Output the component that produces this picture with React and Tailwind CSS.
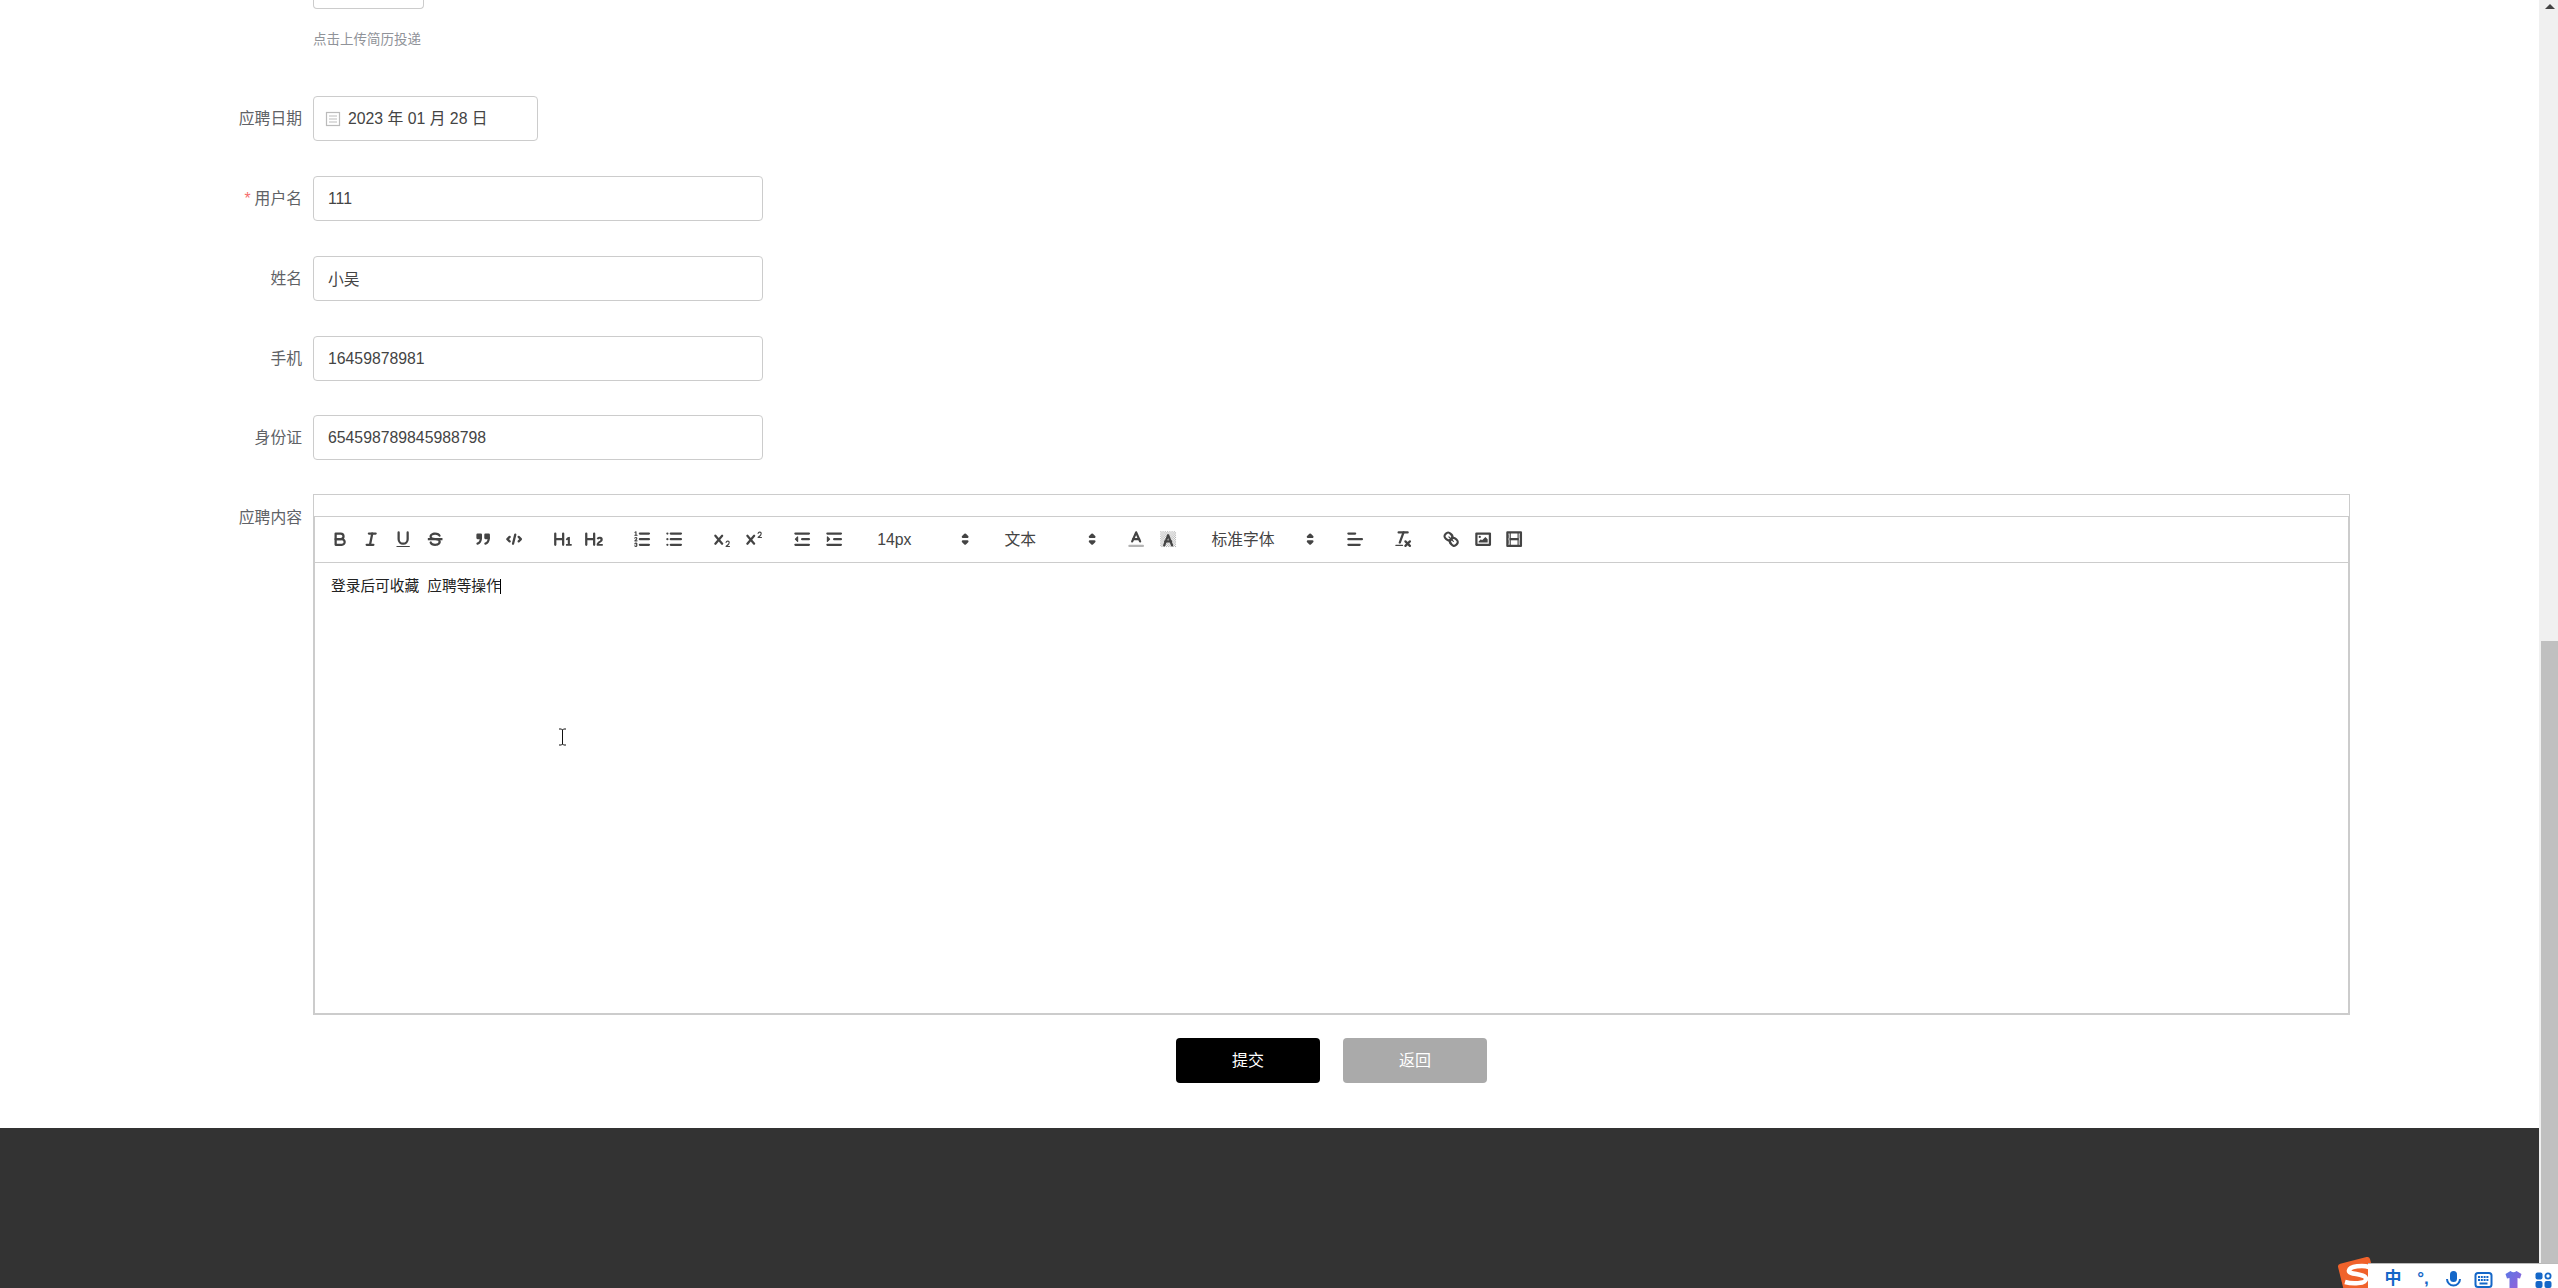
import React from 'react';

const FONT = "font-['Liberation_Sans','Noto_Sans_CJK_SC',sans-serif]";

function QlIcon({ children }) {
    return (
        <svg viewBox="0 0 18 18" width="20.3" height="20.3" fill="none" stroke="#444" strokeWidth="2" strokeLinecap="round" strokeLinejoin="round">
            {children}
        </svg>
    );
}

const F = { fill: '#444', stroke: 'none' };

const hatch = [];
for (let y = 2; y < 16; y++) {
    for (let x = 2; x < 16; x++) {
        if ((x + y) % 2 === 0) hatch.push([x, y]);
    }
}

const icons = {
    bold: (
        <>
            <path d="M5,4H9.5A2.5,2.5,0,0,1,12,6.5v0A2.5,2.5,0,0,1,9.5,9H5A0,0,0,0,1,5,9V4A0,0,0,0,1,5,4Z" />
            <path d="M5,9h5.5A2.5,2.5,0,0,1,13,11.5v0A2.5,2.5,0,0,1,10.5,14H5a0,0,0,0,1,0,0V9A0,0,0,0,1,5,9Z" />
        </>
    ),
    italic: (
        <>
            <line x1="7" x2="13" y1="4" y2="4" />
            <line x1="5" x2="11" y1="14" y2="14" />
            <line x1="8" x2="10" y1="14" y2="4" />
        </>
    ),
    underline: (
        <>
            <path d="M5,3V9a4.012,4.012,0,0,0,4,4H9a4.012,4.012,0,0,0,4-4V3" />
            <rect {...F} height="1" rx="0.5" ry="0.5" width="12" x="3" y="15" />
        </>
    ),
    strike: (
        <>
            <line x1="15.5" x2="2.5" y1="9" y2="9" strokeLinecap="butt" />
            <path {...F} d="M9.007,8C6.542,7.791,6,7.519,6,6.5,6,5.792,7.283,5,9,5c1.571,0,2.765.679,2.969,1.309a1,1,0,0,0,1.9-.617C13.356,4.106,11.354,3,9,3,6.2,3,4,4.538,4,6.5a3.2,3.2,0,0,0,.5,1.843Z" />
            <path {...F} d="M8.984,10C11.457,10.208,12,10.479,12,11.5c0,0.708-1.283,1.5-3,1.5-1.571,0-2.765-.679-2.969-1.309a1,1,0,1,0-1.9.617C4.644,13.894,6.646,15,9,15c2.8,0,5-1.538,5-3.5a3.2,3.2,0,0,0-.5-1.843Z" />
        </>
    ),
    quote: (
        <>
            <rect fill="#444" height="3" width="3" x="4" y="5" />
            <rect fill="#444" height="3" width="3" x="11" y="5" />
            <path d="M7,8c0,4.031-3,5-3,5" />
            <path d="M14,8c0,4.031-3,5-3,5" />
        </>
    ),
    code: (
        <>
            <polyline points="5 7 3 9 5 11" />
            <polyline points="13 7 15 9 13 11" />
            <line x1="10" x2="8" y1="5" y2="13" />
        </>
    ),
    h1: <path {...F} d="M10,4V14a1,1,0,0,1-2,0V10H3v4a1,1,0,0,1-2,0V4A1,1,0,0,1,3,4V8H8V4a1,1,0,0,1,2,0Zm6.06787,9.209H14.98975V7.59863a.54085.54085,0,0,0-.605-.60547h-.62744a1.01119,1.01119,0,0,0-.748.29688L11.645,8.56641a.5435.5435,0,0,0-.022.8584l.28613.30762a.53861.53861,0,0,0,.84717.0332l.09912-.08789a1.2137,1.2137,0,0,0,.2417-.35254h.02246s-.01123.30859-.01123.60547V13.209H12.041a.54085.54085,0,0,0-.605.60547v.43945a.54085.54085,0,0,0,.605.60547h4.02686a.54085.54085,0,0,0,.605-.60547v-.43945A.54085.54085,0,0,0,16.06787,13.209Z" />,
    h2: <path {...F} d="M16.73975,13.81445v.43945a.54085.54085,0,0,1-.605.60547H11.855a.58392.58392,0,0,1-.64893-.60547V14.0127c0-2.90527,3.39941-3.42187,3.39941-4.55469a.77675.77675,0,0,0-.84717-.78125,1.17684,1.17684,0,0,0-.83594.38477c-.2749.26367-.561.374-.85791.13184l-.4292-.34082c-.30811-.24219-.38525-.51758-.1543-.81445a2.97155,2.97155,0,0,1,2.45361-1.17676,2.45393,2.45393,0,0,1,2.68408,2.40918c0,2.45312-3.1792,2.92676-3.27832,3.93848h2.79443A.54085.54085,0,0,1,16.73975,13.81445ZM9,3A.99974.99974,0,0,0,8,4V8H3V4A1,1,0,0,0,1,4V14a1,1,0,0,0,2,0V10H8v4a1,1,0,0,0,2,0V4A.99974.99974,0,0,0,9,3Z" />,
    ol: (
        <>
            <line x1="7" x2="15" y1="4" y2="4" />
            <line x1="7" x2="15" y1="9" y2="9" />
            <line x1="7" x2="15" y1="14" y2="14" />
            <line strokeWidth="1" x1="2.5" x2="4.5" y1="5.5" y2="5.5" />
            <path {...F} d="M3.5,6A0.5,0.5,0,0,1,3,5.5V3.085l-0.276.138A0.5,0.5,0,0,1,2.053,3c-0.124-.247-0.023-0.324.224-0.447l1-.5A0.5,0.5,0,0,1,4,2.5v3A0.5,0.5,0,0,1,3.5,6Z" />
            <path strokeWidth="1" d="M4.5,10.5h-2c0-.234,1.85-1.076,1.85-2.234A0.959,0.959,0,0,0,2.5,8.156" />
            <path strokeWidth="1" d="M2.5,14.846a0.959,0.959,0,0,0,1.85-.109A0.7,0.7,0,0,0,3.75,14a0.688,0.688,0,0,0,.6-0.736,0.959,0.959,0,0,0-1.85-.109" />
        </>
    ),
    ul: (
        <>
            <line x1="6" x2="15" y1="4" y2="4" />
            <line x1="6" x2="15" y1="9" y2="9" />
            <line x1="6" x2="15" y1="14" y2="14" />
            <line x1="3" x2="3" y1="4" y2="4" />
            <line x1="3" x2="3" y1="9" y2="9" />
            <line x1="3" x2="3" y1="14" y2="14" />
        </>
    ),
    sub: (
        <>
            <path {...F} d="M15.5,15H13.861a3.858,3.858,0,0,0,1.914-2.975,1.8,1.8,0,0,0-1.6-1.751A1.921,1.921,0,0,0,12.021,11.7a0.50013,0.50013,0,1,0,.957.291h0a0.914,0.914,0,0,1,1.053-.725,0.81,0.81,0,0,1,.744.762c0,1.076-1.16971,1.86982-1.93971,2.43082A1.45639,1.45639,0,0,0,12,15.5a0.5,0.5,0,0,0,.5.5h3A0.5,0.5,0,0,0,15.5,15Z" />
            <path {...F} d="M9.65,5.241a1,1,0,0,0-1.409.108L6,7.964,3.759,5.349A1,1,0,0,0,2.192,6.59178Q2.21541,6.6213,2.241,6.649L4.684,9.5,2.241,12.35A1,1,0,0,0,3.71,13.70722q0.02557-.02768.049-0.05722L6,11.036,8.241,13.65a1,1,0,1,0,1.567-1.24277Q9.78459,12.3777,9.759,12.35L7.316,9.5,9.759,6.651A1,1,0,0,0,9.65,5.241Z" />
        </>
    ),
    sup: (
        <>
            <path {...F} d="M15.5,7H13.861a4.015,4.015,0,0,0,1.914-2.975,1.8,1.8,0,0,0-1.6-1.751A1.922,1.922,0,0,0,12.021,3.7a0.5,0.5,0,1,0,.957.291,0.917,0.917,0,0,1,1.053-.725,0.81,0.81,0,0,1,.744.762c0,1.077-1.164,1.925-1.934,2.486A1.423,1.423,0,0,0,12,7.5a0.5,0.5,0,0,0,.5.5h3A0.5,0.5,0,0,0,15.5,7Z" />
            <path {...F} d="M9.651,5.241a1,1,0,0,0-1.41.108L6,7.964,3.759,5.349a1,1,0,1,0-1.519,1.3L4.683,9.5,2.241,12.35a1,1,0,1,0,1.519,1.3L6,11.036,8.241,13.65a1,1,0,0,0,1.519-1.3L7.317,9.5,9.759,6.651A1,1,0,0,0,9.651,5.241Z" />
        </>
    ),
    outdent: (
        <>
            <line x1="3" x2="15" y1="14" y2="14" />
            <line x1="3" x2="15" y1="4" y2="4" />
            <line x1="9" x2="15" y1="9" y2="9" />
            <polyline fill="#444" strokeWidth="1" points="5 7 5 11 3 9 5 7" />
        </>
    ),
    indent: (
        <>
            <line x1="3" x2="15" y1="14" y2="14" />
            <line x1="3" x2="15" y1="4" y2="4" />
            <line x1="9" x2="15" y1="9" y2="9" />
            <polyline fill="#444" strokeWidth="1" points="3 7 3 11 5 9 3 7" />
        </>
    ),
    color: (
        <>
            <line opacity="0.4" x1="3" x2="15" y1="15" y2="15" />
            <polyline points="5.5 11 9 3 12.5 11" />
            <line x1="11.63" x2="6.38" y1="9" y2="9" />
        </>
    ),
    background: (
        <>
            <g opacity="0.4">
                {hatch.map(([x, y]) => (
                    <rect key={`${x}-${y}`} x={x} y={y} width="1" height="1" fill="#444" stroke="none" />
                ))}
            </g>
            <polyline points="5.5 14.5 9 5.5 12.5 14.5" />
            <line x1="11.63" x2="6.38" y1="11" y2="11" />
        </>
    ),
    align: (
        <>
            <line x1="3" x2="15" y1="9" y2="9" />
            <line x1="3" x2="13" y1="14" y2="14" />
            <line x1="3" x2="9" y1="4" y2="4" />
        </>
    ),
    clean: (
        <>
            <line x1="5" x2="13" y1="3" y2="3" />
            <line x1="6" x2="9.35" y1="12" y2="3" />
            <line x1="11" x2="15" y1="11" y2="15" />
            <line x1="15" x2="11" y1="11" y2="15" />
            <rect {...F} height="1" rx="0.5" ry="0.5" width="7" x="2" y="14" />
        </>
    ),
    link: (
        <>
            <line strokeWidth="1" x1="7" x2="11" y1="7" y2="11" />
            <path d="M8.9,4.577a3.476,3.476,0,0,1,.36,4.679A3.476,3.476,0,0,1,4.577,8.9C3.185,7.5,2.035,6.4,4.217,4.217S7.5,3.185,8.9,4.577Z" />
            <path d="M13.423,9.1a3.476,3.476,0,0,0-4.679-.36,3.476,3.476,0,0,0,.36,4.679c1.392,1.392,2.5,2.542,4.679.36S14.815,10.5,13.423,9.1Z" />
        </>
    ),
    image: (
        <>
            <rect height="10" width="12" x="3" y="4" />
            <circle {...F} cx="6" cy="7" r="1" />
            <polyline {...F} points="5 12 5 11 7 9 8 10 11 7 13 9 13 12 5 12" />
        </>
    ),
    video: (
        <>
            <rect height="12" width="12" x="3" y="3" />
            <rect {...F} height="12" width="1" x="5" y="3" />
            <rect {...F} height="12" width="1" x="12" y="3" />
            <rect {...F} height="2" width="8" x="5" y="8" />
            <rect {...F} height="3" width="1" x="3" y="5" />
            <rect {...F} height="3" width="1" x="3" y="10" />
            <rect {...F} height="3" width="1" x="14" y="5" />
            <rect {...F} height="3" width="1" x="14" y="10" />
        </>
    ),
};

function Btn({ name }) {
    return (
        <span className="flex h-[27px] w-[31.67px] items-center justify-center">
            <QlIcon>{icons[name]}</QlIcon>
        </span>
    );
}

function Group({ names }) {
    return (
        <span className="mr-[16.5px] flex">
            {names.map(n => <Btn key={n} name={n} />)}
        </span>
    );
}

function Picker({ label, className }) {
    return (
        <span className={`mr-[16.5px] flex h-[27px] items-center justify-between pl-[11px] pr-[2px] text-[15.8px] text-[#444] ${className}`}>
            {label}
            <QlIcon>
                <polygon strokeWidth="2" fill="#444" points="7 11 9 13 11 11 7 11" />
                <polygon strokeWidth="2" fill="#444" points="7 7 9 5 11 7 7 7" />
            </QlIcon>
        </span>
    );
}

function Row({ label, required, className = 'mb-[35px]', children }) {
    return (
        <div className={`flex h-[45px] items-center ${className}`}>
            <label className="w-[302px] text-right text-[15.8px] text-[#606266]">
                {required && <span className="mr-1 text-[#f56c6c]">*</span>}
                {label}
            </label>
            <div className="ml-[11px]">{children}</div>
        </div>
    );
}

function TextInput({ value }) {
    return (
        <input
            readOnly
            value={value}
            className="block h-[45px] w-[450px] rounded border border-[#ccc] bg-white px-[14px] text-[15.8px] text-[#444] outline-none"
        />
    );
}

function ImeBar() {
    return (
        <div className="absolute bottom-0 right-0 h-[25px] w-[190px] overflow-hidden border-t border-[#bbb] bg-white">
            <div className="flex pl-[10px] pt-[5px] text-[#1467c8]">
                <span className="flex w-[30px] justify-center text-[17px] font-bold leading-[19px]">中</span>
                <span className="flex w-[30px] justify-center text-[17px] font-bold leading-[19px]">°,</span>
                <span className="flex w-[30px] justify-center pt-[2px]">
                    <svg width="17" height="18" viewBox="0 0 16 18">
                        <rect x="4.5" y="0" width="7" height="11" rx="3.5" fill="#1467c8" />
                        <path d="M1.5 8a6.5 6.5 0 0 0 13 0" fill="none" stroke="#1467c8" strokeWidth="2" />
                    </svg>
                </span>
                <span className="flex w-[30px] justify-center pt-[3px]">
                    <svg width="19" height="16" viewBox="0 0 18 16">
                        <rect x="1" y="1" width="16" height="14" rx="2.5" fill="none" stroke="#1467c8" strokeWidth="2" />
                        <path d="M3.5 5h11M3.5 8h11" stroke="#1467c8" strokeWidth="2" strokeDasharray="2 0.8" />
                        <path d="M5 11.5h8" stroke="#1467c8" strokeWidth="2" />
                    </svg>
                </span>
                <span className="flex w-[30px] justify-center pt-[2px]">
                    <svg width="19" height="18" viewBox="0 0 18 18">
                        <defs>
                            <linearGradient id="shirt" x1="0" y1="0" x2="1" y2="1">
                                <stop offset="0" stopColor="#5a78e6" />
                                <stop offset="1" stopColor="#9a5fd8" />
                            </linearGradient>
                        </defs>
                        <path d="M1 3 L6 0 Q9 2.5 12 0 L17 3 L15.5 7.5 L13 7 V18 H5 V7 L2.5 7.5 Z" fill="url(#shirt)" />
                    </svg>
                </span>
                <span className="flex w-[30px] justify-center pt-[3px]">
                    <svg width="17" height="17" viewBox="0 0 17 17">
                        <rect x="0.5" y="0.5" width="7" height="7" rx="2" fill="#1467c8" />
                        <circle cx="13" cy="4" r="2.6" fill="none" stroke="#1467c8" strokeWidth="1.8" />
                        <rect x="0.5" y="9" width="7" height="7" rx="2" fill="#1467c8" />
                        <rect x="9.5" y="9" width="7" height="7" rx="2" fill="#1467c8" />
                    </svg>
                </span>
            </div>
        </div>
    );
}

function SogouLogo() {
    return (
        <svg className="absolute bottom-0 right-[178px]" width="44" height="31" viewBox="0 0 44 31">
            <rect x="5" y="3" width="33" height="36" rx="3" fill="#f0622b" transform="rotate(-14 21 20)" />
            <path d="M33 10 C27 8 14 9 13 13.5 C12 18 30 16 30 22 C30 27 16 27 9 25" fill="none" stroke="#fff" strokeWidth="4.5" />
        </svg>
    );
}

export default function App() {
    return (
        <div className={`relative flex h-screen w-full overflow-hidden bg-white ${FONT}`}>
            <div className="flex min-w-0 flex-1 flex-col">
                <main className="h-[1128px] shrink-0">
                    <div className="ml-[313px] h-[9px] w-[111px] rounded-b border-x border-b border-[#ccc]" />
                    <p className="ml-[313px] mt-[22px] mb-[48px] text-[13.5px] leading-[17px] text-[#909399]">点击上传简历投递</p>

                    <Row label="应聘日期">
                        <div className="flex h-[45px] w-[225px] items-center rounded border border-[#ccc] pl-[11px] text-[15.8px] text-[#444]">
                            <svg className="mr-[7px]" width="16" height="16" viewBox="0 0 16 16" fill="none" stroke="#bbb" strokeWidth="1.2">
                                <rect x="1.5" y="1.5" width="13" height="13" />
                                <path d="M4 5h8M4 8h8M4 11h8" />
                            </svg>
                            2023 年 01 月 28 日
                        </div>
                    </Row>
                    <Row label="用户名" required><TextInput value="111" /></Row>
                    <Row label="姓名"><TextInput value="小吴" /></Row>
                    <Row label="手机" className="mb-[34px]"><TextInput value="16459878981" /></Row>
                    <Row label="身份证" className="mb-[34px]"><TextInput value="654598789845988798" /></Row>

                    <div className="flex">
                        <label className="w-[302px] pt-[14px] text-right text-[15.8px] leading-5 text-[#606266]">应聘内容</label>
                        <div className="ml-[11px]">
                            <div className="flex h-[521px] w-[2037px] flex-col border border-[#ccc] pt-[21px]">
                                <div className="flex flex-1 flex-col border border-[#ccc]">
                                    <div className="flex h-[46px] items-center border-b border-[#ccc] pl-[9px]">
                                        <Group names={['bold', 'italic', 'underline', 'strike']} />
                                        <Group names={['quote', 'code']} />
                                        <Group names={['h1', 'h2']} />
                                        <Group names={['ol', 'ul']} />
                                        <Group names={['sub', 'sup']} />
                                        <Group names={['outdent', 'indent']} />
                                        <Picker label="14px" className="w-[110.7px]" />
                                        <Picker label="文本" className="w-[110.7px]" />
                                        <Group names={['color', 'background']} />
                                        <Picker label="标准字体" className="w-[122px]" />
                                        <Group names={['align']} />
                                        <Group names={['clean']} />
                                        <Group names={['link', 'image', 'video']} />
                                    </div>
                                    <div className="flex-1 px-[16px] pt-[13px] text-[14.7px] leading-5 text-[#222]">
                                        <p className="flex items-center">
                                            <span className="whitespace-pre">登录后可收藏  应聘等操作</span>
                                            <span className="-ml-px h-[15px] w-px bg-black" />
                                        </p>
                                    </div>
                                </div>
                            </div>
                            <div className="mt-[23px] flex justify-center gap-[23px]">
                                <button className="h-[45px] w-[144px] rounded bg-black text-base text-white">提交</button>
                                <button className="h-[45px] w-[144px] rounded bg-[#aaa] text-base text-white">返回</button>
                            </div>
                        </div>
                    </div>
                </main>
                <footer className="flex-1 bg-[#333]" />
            </div>

            {/* fake window scrollbar, the real page was scrolled */}
            <div className="flex w-[19px] shrink-0 flex-col bg-[#f0f0f0] pl-[2px]">
                <div className="flex h-[641px] shrink-0 justify-center pt-[4px]">
                    <span className="h-0 w-0 border-x-[5px] border-b-[5px] border-x-transparent border-b-[#444]" />
                </div>
                <div className="flex-1 bg-[#c0c0c0]" />
            </div>

            {/* text cursor */}
            <svg className="absolute left-[558px] top-[728px]" width="9" height="18" viewBox="0 0 9 18">
                <path d="M1 1h2.5l1 1 1-1H8M4.5 2v14M1 17h2.5l1-1 1 1H8" fill="none" stroke="#111" strokeWidth="1" />
            </svg>

            <SogouLogo />
            <ImeBar />
        </div>
    );
}
